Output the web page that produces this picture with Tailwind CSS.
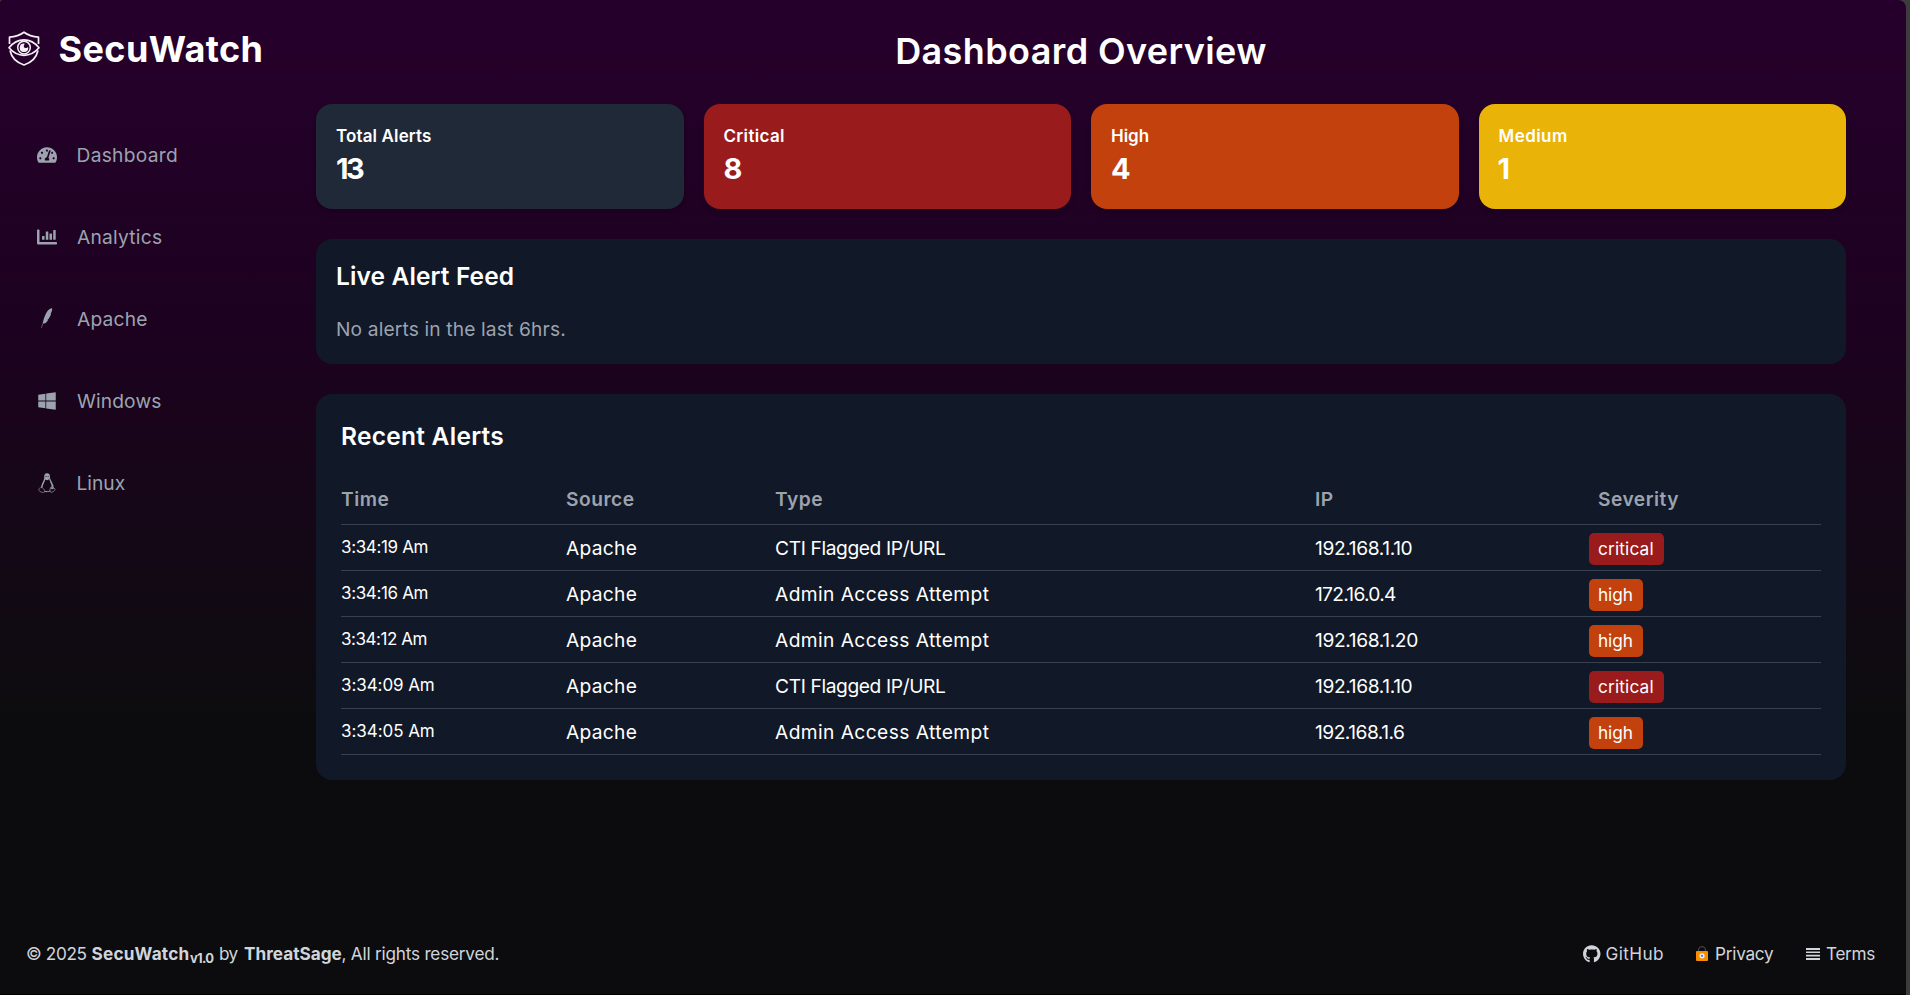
<!DOCTYPE html>
<html lang="en">
<head>
<meta charset="utf-8">
<title>SecuWatch</title>
<script src="https://cdn.jsdelivr.net/npm/@tailwindcss/browser@4"></script>
</head>
<body class="h-[995px] overflow-hidden bg-[#3c3c3c] pr-1 font-['Inter','Liberation_Sans',sans-serif] text-[19.2px] text-white">
<div class="flex h-[995px] flex-col rounded-tl-[3px] rounded-tr-lg border-b border-black bg-linear-to-b from-[#26002c] via-[#1c021f] via-35% to-[#0c0c0e] to-72%">

  <div class="flex">
    <aside class="w-[316px] shrink-0 pt-6">
      <div class="flex h-[50px] items-center pl-[8px]">
        <svg class="mb-0.5 h-[35px] w-8" viewBox="0 0 32 35" fill="none" stroke="#f5f0f6" stroke-width="1.7" stroke-linejoin="round">
          <path d="M1.5 13V6.2C7 5.6 12 4 16 1.2c4 2.8 9 4.400 14.500 5V13M2 19.500C3.500 26.500 8.500 31.500 16 34c7.500-2.500 12.500-7.500 14-14.500"/>
          <path d="M1 16.800C5 11.800 10 8.900 16 8.900s11 2.900 15 7.900c-4 4.700-9 7.500-15 7.500S5 21.500 1 16.800Z"/>
          <circle cx="16" cy="16.600" r="6.300" stroke-width="1.500"/>
          <path d="M16 13a3.700 3.700 0 1 0 3.700 3.900A2.300 2.300 0 0 1 16 13Z" fill="#f5f0f6" stroke-width="1.200"/>
        </svg>
        <span class="ml-[18.500px] text-[36px] font-bold tracking-[0.400px]">SecuWatch</span>
      </div>
      <nav class="mt-10 text-[#9ca3af]">
        <a class="flex h-[82px] items-center pl-[37px]">
          <svg class="h-5 w-5" viewBox="0 0 576 576" fill="currentColor"><path transform="translate(0 32)" d="M288 32C128.940 32 0 160.940 0 320c0 52.800 14.250 102.260 39.060 144.800 5.610 9.620 16.300 15.200 27.440 15.200h443c11.140 0 21.830-5.580 27.440-15.200C561.750 422.260 576 372.800 576 320c0-159.060-128.940-288-288-288zm0 64c14.710 0 26.580 10.130 30.320 23.650-1.110 2.260-2.640 4.230-3.450 6.670l-9.220 27.670c-5.130 3.490-10.970 6.010-17.640 6.010-17.670 0-32-14.330-32-32S270.330 96 288 96zM96 384c-17.670 0-32-14.330-32-32s14.330-32 32-32 32 14.330 32 32-14.330 32-32 32zm48-160c-17.670 0-32-14.330-32-32s14.330-32 32-32 32 14.330 32 32-14.330 32-32 32zm246.770-72.410l-61.330 184C343.130 347.330 352 364.540 352 384c0 11.720-3.380 22.550-8.880 32H232.880c-5.500-9.450-8.880-20.280-8.880-32 0-33.940 26.500-61.430 59.900-63.590l61.340-184.010c4.170-12.560 17.730-19.450 30.360-15.170 12.570 4.190 19.350 17.790 15.170 30.360zm14.660 57.200l15.520-46.550c3.470-1.290 7.130-2.230 11.050-2.230 17.670 0 32 14.330 32 32s-14.330 32-32 32c-11.380-.010-20.890-6.280-26.570-15.220zM480 384c-17.670 0-32-14.330-32-32s14.330-32 32-32 32 14.330 32 32-14.330 32-32 32z"/></svg>
          <span class="ml-[19.500px] tracking-[0.290px]">Dashboard</span>
        </a>
        <a class="flex h-[82px] items-center pl-[37px]">
          <svg class="h-5 w-5" viewBox="0 0 20 20" fill="currentColor"><path d="M0 3.200q0-.700.700-.700h1.100q.700 0 .700.700V15h16.800q.700 0 .700.700v1.100q0 .700-.700.700H1.200Q0 17.500 0 16.300Z"/><rect x="5" y="9" width="2.500" height="3.800" rx=".4"/><rect x="8.800" y="4.400" width="2.500" height="8.400" rx=".4"/><rect x="12.500" y="6.500" width="2.500" height="6.300" rx=".4"/><rect x="16.200" y="3" width="2.500" height="9.800" rx=".4"/></svg>
          <span class="ml-5 tracking-[0.240px]">Analytics</span>
        </a>
        <a class="flex h-[82px] items-center pl-[37px]">
          <svg class="mb-0.5 h-5 w-5" viewBox="0 0 20 20" fill="currentColor"><path d="M14.900.300C13.400-.300 10.800 2 9 5.400 7.300 8.500 6.400 12 5.900 15.200c2 .800 3.700-.600 5.100-3.300l-.600.100c2-1.700 3-4.200 3.700-6.300l-.6.100C14.700 4.300 15.700 1.200 14.900.300Z"/><path d="M12.200 4C8.500 9 5.700 14.500 4.400 20" fill="none" stroke="currentColor" stroke-width=".5"/></svg>
          <span class="ml-5 tracking-[0.200px]">Apache</span>
        </a>
        <a class="flex h-[82px] items-center pl-[37px]">
          <svg class="h-5 w-5" viewBox="-32 0 512 512" fill="currentColor"><path d="M0 93.700l183.600-25.300v177.400H0V93.700zm0 324.600l183.600 25.300V268.400H0v149.900zm203.800 28L448 480V268.400H203.800v177.900zm0-380.600v180.100H448V32L203.800 65.700z"/></svg>
          <span class="ml-5 tracking-[0.120px]">Windows</span>
        </a>
        <a class="flex h-[82px] items-center pl-[37px]">
          <svg class="h-5 w-5" viewBox="0 0 20 20" fill="none" stroke="currentColor"><path d="M7.300 5.800C6.800 1.800 8 .3 10 .3s3.300 1.400 3 4.700l-.8 1.200-2.100 1-2-.8Z" fill="currentColor" stroke="none"/><path d="M7.700 5.500c.1 3-3 5.300-3.100 9.200M12.700 5.500c.2 3 3.500 5 3.200 9" stroke-width="1.300"/><path d="M7 8.500c-1 2-1.700 3-1.400 5.300M13.500 9c1 1.600 1.500 3 1 5.200" stroke-width=".6"/><path d="M4.500 14.200c-1 .700-2.700 1-2.600 2 .1.800.2 2 .9 2.300 1.600.6 3 1.300 4.300.9 1.500-.5.300-2.200-.7-3.800Z" stroke-width=".6"/><path d="M15.900 14.200c.700 1 2.300 1.300 2.200 2.200-.2 1.200-2.400 2.900-4 3-1.400 0-1.100-3.400-.6-4.900Z" stroke-width=".7"/><path d="M14 14.900c.9 1 2 .6 2.600-.3" stroke-width="1.300"/><path d="M7.500 18.200c1.800.7 4 .5 5.500-.3" stroke-width="1"/><circle cx="9" cy="3.500" r=".55" fill="#180318" stroke="none"/><circle cx="11.100" cy="3.500" r=".55" fill="#180318" stroke="none"/></svg>
          <span class="ml-[19.500px]">Linux</span>
        </a>
      </nav>
    </aside>

    <main class="w-[1530px]">
      <h1 class="h-[104px] text-center text-[36px] leading-[102px] font-semibold tracking-[0.390px]">Dashboard Overview</h1>

      <section class="grid grid-cols-4 gap-5 font-semibold">
        <div class="h-[105px] rounded-2xl bg-[#1f2937] p-5 shadow-md">
          <div class="text-[17px] leading-6 tracking-[0.130px]">Total Alerts</div>
          <div class="text-[29px] leading-[42px] font-bold tracking-[-2.500px]">13</div>
        </div>
        <div class="h-[105px] rounded-2xl bg-[#991b1b] p-5 shadow-md">
          <div class="text-[17px] leading-6 tracking-[0.330px]">Critical</div>
          <div class="text-[29px] leading-[42px] font-bold">8</div>
        </div>
        <div class="h-[105px] rounded-2xl bg-[#c2410c] p-5 shadow-md">
          <div class="text-[17px] leading-6">High</div>
          <div class="text-[29px] leading-[42px] font-bold">4</div>
        </div>
        <div class="h-[105px] rounded-2xl bg-[#eab308] p-5 shadow-md">
          <div class="text-[17px] leading-6 tracking-[0.450px]">Medium</div>
          <div class="-ml-px text-[29px] leading-[42px] font-bold">1</div>
        </div>
      </section>

      <section class="mt-[30px] h-[125px] rounded-2xl bg-[#111827] p-5">
        <h2 class="text-[24.500px] leading-[35px] font-semibold tracking-[0.120px]">Live Alert Feed</h2>
        <p class="mt-5 leading-[30px] tracking-[0.140px] text-[#9ca3af]">No alerts in the last 6hrs.</p>
      </section>

      <section class="mt-[30px] h-[386px] rounded-2xl bg-[#111827] p-[25px]">
        <h2 class="text-[24.500px] leading-[35px] font-semibold tracking-[0.270px]">Recent Alerts</h2>
        <div class="mt-5 grid h-[51px] grid-cols-[225px_210px_539px_274px_232px] items-center border-b border-[#374151] font-semibold tracking-[0.500px] text-[#9ca3af]">
          <span>Time</span><span>Source</span><span class="-ml-px">Type</span><span>IP</span><span class="pl-[9px]">Severity</span>
        </div>
        <div class="grid h-[46px] grid-cols-[225px_210px_539px_274px_232px] items-center border-b border-[#374151]">
          <span class="text-[17px] tracking-[-0.350px]">3:34:19 Am</span><span class="pt-0.5 tracking-[0.300px]">Apache</span><span class="-ml-px pt-0.5 tracking-[-0.380px]">CTI Flagged IP/URL</span><span class="pt-0.5 tracking-[-0.380px]">192.168.1.10</span>
          <span class="mt-[3px] h-8 w-[75px] rounded-[5px] bg-[#991b1b] pl-[9px] text-[17.300px] leading-8 tracking-[0.150px]">critical</span>
        </div>
        <div class="grid h-[46px] grid-cols-[225px_210px_539px_274px_232px] items-center border-b border-[#374151]">
          <span class="text-[17px] tracking-[-0.350px]">3:34:16 Am</span><span class="pt-0.5 tracking-[0.300px]">Apache</span><span class="-ml-px pt-0.5 tracking-[0.420px]">Admin Access Attempt</span><span class="pt-0.5 tracking-[-0.720px]">172.16.0.4</span>
          <span class="mt-[3px] h-8 w-[54px] rounded-[5px] bg-[#c2410c] pl-[9px] text-[17.300px] leading-8 tracking-[-0.100px]">high</span>
        </div>
        <div class="grid h-[46px] grid-cols-[225px_210px_539px_274px_232px] items-center border-b border-[#374151]">
          <span class="text-[17px] tracking-[-0.440px]">3:34:12 Am</span><span class="pt-0.5 tracking-[0.300px]">Apache</span><span class="-ml-px pt-0.5 tracking-[0.420px]">Admin Access Attempt</span><span class="pt-0.5 tracking-[-0.380px]">192.168.1.20</span>
          <span class="mt-[3px] h-8 w-[54px] rounded-[5px] bg-[#c2410c] pl-[9px] text-[17.300px] leading-8 tracking-[-0.100px]">high</span>
        </div>
        <div class="grid h-[46px] grid-cols-[225px_210px_539px_274px_232px] items-center border-b border-[#374151]">
          <span class="text-[17px] tracking-[-0.080px]">3:34:09 Am</span><span class="pt-0.5 tracking-[0.300px]">Apache</span><span class="-ml-px pt-0.5 tracking-[-0.380px]">CTI Flagged IP/URL</span><span class="pt-0.5 tracking-[-0.380px]">192.168.1.10</span>
          <span class="mt-[3px] h-8 w-[75px] rounded-[5px] bg-[#991b1b] pl-[9px] text-[17.300px] leading-8 tracking-[0.150px]">critical</span>
        </div>
        <div class="grid h-[46px] grid-cols-[225px_210px_539px_274px_232px] items-center border-b border-[#374151]">
          <span class="text-[17px] tracking-[-0.060px]">3:34:05 Am</span><span class="pt-0.5 tracking-[0.300px]">Apache</span><span class="-ml-px pt-0.5 tracking-[0.420px]">Admin Access Attempt</span><span class="pt-0.5 tracking-[-0.510px]">192.168.1.6</span>
          <span class="mt-[3px] h-8 w-[54px] rounded-[5px] bg-[#c2410c] pl-[9px] text-[17.300px] leading-8 tracking-[-0.100px]">high</span>
        </div>
      </section>
    </main>
  </div>

  <footer class="mt-auto flex h-[82px] items-center justify-between pt-0.5 pr-[30px] pl-[26px] text-[17.200px] whitespace-nowrap text-[#d1d5db]">
    <div class="flex items-center">
      <span class="w-[65.500px] tracking-[-0.370px]">© 2025</span>
      <b class="w-[98.500px] tracking-[0.200px]">SecuWatch</b>
      <b class="w-[29px] pt-[9px] text-[13px] tracking-[-0.700px]">v1.0</b>
      <span class="w-[25px] tracking-[-0.600px]">by</span>
      <b class="w-[97.500px]">ThreatSage</b>
      <span class="tracking-[-0.220px]">, All rights reserved.</span>
    </div>
    <div class="flex items-center">
      <a class="flex w-[113px] items-center">
        <svg class="h-[18px] w-[17.500px]" viewBox="0 0 496 512" fill="currentColor"><path d="M165.900 397.400c0 2-2.300 3.600-5.200 3.600-3.300.3-5.600-1.300-5.600-3.600 0-2 2.300-3.600 5.200-3.600 3-.3 5.600 1.300 5.600 3.600zm-31.100-4.500c-.7 2 1.300 4.300 4.300 4.900 2.600 1 5.600 0 6.200-2s-1.300-4.300-4.300-5.200c-2.600-.7-5.500.3-6.200 2.300zm44.200-1.700c-2.900.7-4.900 2.600-4.600 4.900.3 2 2.900 3.300 5.900 2.600 2.900-.7 4.900-2.600 4.600-4.600-.3-1.900-3-3.200-5.900-2.900zM244.800 8C106.100 8 0 113.300 0 252c0 110.900 69.800 205.800 169.500 239.200 12.800 2.300 17.300-5.600 17.300-12.100 0-6.200-.3-40.400-.3-61.400 0 0-70 15-84.700-29.800 0 0-11.400-29.100-27.800-36.600 0 0-22.900-15.700 1.600-15.400 0 0 24.900 2 38.600 25.800 21.900 38.600 58.600 27.500 72.900 20.900 2.300-16 8.800-27.100 16-33.700-55.900-6.200-112.300-14.300-112.300-110.500 0-27.500 7.600-41.300 23.600-58.900-2.600-6.500-11.100-33.300 2.600-67.900 20.900-6.500 69 27 69 27 20-5.600 41.500-8.500 62.800-8.500s42.800 2.900 62.800 8.500c0 0 48.100-33.600 69-27 13.700 34.700 5.200 61.400 2.600 67.900 16 17.700 25.800 31.500 25.800 58.900 0 96.500-58.900 104.200-114.800 110.500 9.200 7.900 17 22.900 17 46.400 0 33.700-.3 75.400-.3 83.600 0 6.500 4.600 14.400 17.300 12.100C428.200 457.800 496 362.900 496 252 496 113.300 383.500 8 244.800 8z"/></svg>
        <span class="ml-[5px] tracking-[0.380px]">GitHub</span>
      </a>
      <a class="flex w-[110px] items-center">
        <svg class="h-[15px] w-[12px]" viewBox="0 0 12 15"><path d="M2.500 6V4.200a3.500 3.500 0 0 1 7 0V6" fill="none" stroke="#424242" stroke-width="1.300"/><rect y="5" width="12" height="10" rx="1" fill="#fb8c00"/><circle cx="6" cy="9.800" r="2.600" fill="#e8f0f7"/><circle cx="6" cy="9.800" r="1.100" fill="#1e88e5"/></svg>
        <span class="ml-[7px] tracking-[-0.250px]">Privacy</span>
      </a>
      <a class="flex w-[70px] items-center">
        <svg class="h-[12px] w-[14px]" viewBox="0 0 14 12" fill="currentColor"><path d="M0 0h14v2H0zM0 3.500h14v1.600H0zM0 6.800h14v1.600H0zM0 10h14v2H0z"/></svg>
        <span class="ml-1.5 tracking-[-0.350px]">Terms</span>
      </a>
    </div>
  </footer>
</div>
</body>
</html>
